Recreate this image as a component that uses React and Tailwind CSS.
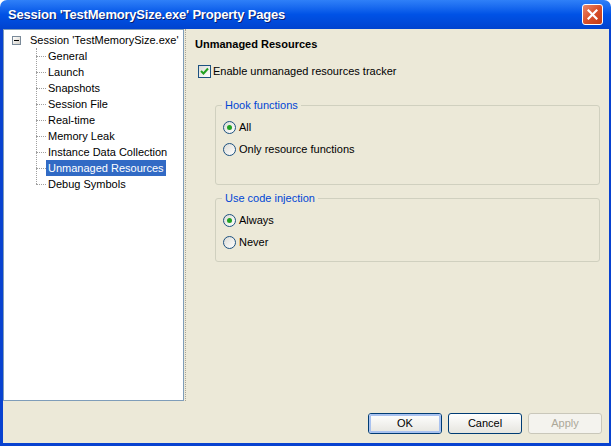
import React from "react";

const FONT = { fontFamily: '"Liberation Sans", Arial, sans-serif' };

const pages = [
  "General",
  "Launch",
  "Snapshots",
  "Session File",
  "Real-time",
  "Memory Leak",
  "Instance Data Collection",
  "Unmanaged Resources",
  "Debug Symbols",
];

function Radio({ checked, label }) {
  return (
    <div className="flex items-center h-[22px]">
      <span className="w-[13px] h-[13px] rounded-full border border-[#1c5180] bg-gradient-to-br from-[#dcdcd6] to-white flex items-center justify-center">
        {checked && <span className="w-[5px] h-[5px] rounded-full bg-[#21a121]" />}
      </span>
      <span className="ml-[3px]">{label}</span>
    </div>
  );
}

function Group({ title, children, className }) {
  return (
    <div className={"relative border border-[#d0d0bf] rounded-[3px] ml-[20px] mr-[9px] " + className}>
      <span className="absolute -top-[8px] left-[6px] px-[3px] bg-[#ece9d8] text-[#0046d5] leading-[14px]">{title}</span>
      {children}
    </div>
  );
}

function Button({ children, primary, disabled }) {
  if (disabled)
    return (
      <div className="w-[74px] h-[21px] border border-[#c9c7ba] rounded-[3px] bg-[#f4f3ee] text-[#aca899] flex items-center justify-center">
        {children}
      </div>
    );
  return (
    <div className="w-[74px] h-[21px] border border-[#003c74] rounded-[3px] bg-gradient-to-b from-white to-[#e6e5df] flex items-center justify-center">
      <div className={"w-full h-full rounded-[2px] flex items-center justify-center " + (primary ? "border-2 border-[#a9c2f0]" : "")}>
        {children}
      </div>
    </div>
  );
}

export default function App() {
  return (
    <div className="w-[611px] h-[446px] flex flex-col text-[11px] text-black overflow-hidden" style={FONT}>
      {/* title bar */}
      <div className="h-[29px] shrink-0 rounded-t-[7px] bg-gradient-to-b from-[#2f80f8] via-[#0052e6] to-[#0043cf] flex items-center pl-[8px] pr-[8px]">
        <span className="text-white font-bold text-[13px] tracking-[-0.2px] [text-shadow:1px_1px_0_#0a1f6e]">
          Session 'TestMemorySize.exe' Property Pages
        </span>
        <div className="ml-auto w-[21px] h-[21px] rounded-[3px] border border-white bg-gradient-to-br from-[#e9866a] via-[#d9502a] to-[#c23b14] flex items-center justify-center">
          <svg width="11" height="11" viewBox="0 0 11 11">
            <path d="M1.5 1.5 L9.5 9.5 M9.5 1.5 L1.5 9.5" stroke="white" strokeWidth="2.2" strokeLinecap="square" />
          </svg>
        </div>
      </div>

      {/* body */}
      <div className="flex-1 flex flex-col bg-[#ece9d8] border-l-[3px] border-r-[2px] border-b-[3px] border-[#0842d0]">
        <div className="flex h-[372px]">
          {/* tree */}
          <div className="w-[181px] h-full bg-white border border-[#7f9db9] pt-[2px]">
            <div className="flex items-center h-[16px] relative">
              <span className="ml-[8px] w-[9px] h-[9px] border border-[#7a8a99] bg-gradient-to-br from-white to-[#d4d0c8] flex items-center justify-center">
                <span className="w-[5px] h-px bg-black" />
              </span>
              <span className="ml-[9px]">Session 'TestMemorySize.exe'</span>
            </div>
            <div className="relative ml-[32px]">
              <div className="absolute left-0 top-0 h-[136px] border-l border-dotted border-[#a0a0a0]" />
              {pages.map((p) => (
                <div key={p} className="flex items-center h-[16px]">
                  <span className="w-[10px] border-t border-dotted border-[#a0a0a0]" />
                  <span
                    className={
                      "px-[2px] h-[16px] flex items-center " +
                      (p === "Unmanaged Resources" ? "bg-[#316ac5] text-white" : "")
                    }
                  >
                    {p}
                  </span>
                </div>
              ))}
            </div>
          </div>
          {/* splitter */}
          <div className="w-[4px] h-full flex justify-center">
            <div className="w-[2px] h-full border-l border-dotted border-[#a8a497]" />
          </div>
          {/* page */}
          <div className="flex-1 pl-[7px] pt-[8px]">
            <div className="font-bold leading-[14px]">Unmanaged Resources</div>
            <div className="flex items-center mt-[12px] ml-[3px]">
              <span className="w-[13px] h-[13px] border border-[#1c5180] bg-gradient-to-br from-[#dcdcd6] to-white flex items-center justify-center">
                <svg width="9" height="9" viewBox="0 0 9 9">
                  <path d="M1 4 L3.5 6.5 L8 1.5" stroke="#21a121" strokeWidth="2" fill="none" />
                </svg>
              </span>
              <span className="ml-[2px]">Enable unmanaged resources tracker</span>
            </div>
            <Group title="Hook functions" className="mt-[25px] h-[80px] pt-[11px] pl-[7px]">
              <Radio checked label="All" />
              <Radio label="Only resource functions" />
            </Group>
            <Group title="Use code injection" className="mt-[13px] h-[64px] pt-[11px] pl-[7px]">
              <Radio checked label="Always" />
              <Radio label="Never" />
            </Group>
          </div>
        </div>
        <div className="flex justify-end gap-[6px] pr-[7px] mt-[12px]">
          <Button primary>OK</Button>
          <Button>Cancel</Button>
          <Button disabled>Apply</Button>
        </div>
      </div>
    </div>
  );
}
